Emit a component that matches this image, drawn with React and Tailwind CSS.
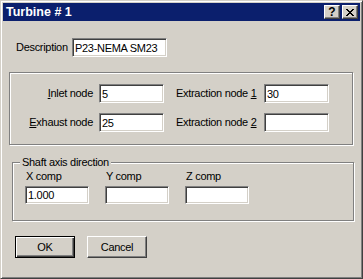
import React from "react";

const font = "font-['Liberation_Sans',Arial,sans-serif] text-[11px] tracking-[-0.3px] text-black";
const sunken =
  "block bg-white border border-t-[#808080] border-l-[#808080] border-b-white border-r-white shadow-[inset_1px_1px_0_#404040,inset_-1px_-1px_0_#d4d0c8] px-[2px] outline-none " +
  font;
const etched = "border border-[#808080] shadow-[inset_1px_1px_0_#fff,1px_1px_0_#fff]";

function Field({ value = "", w, h = 19 }) {
  return (
    <input
      readOnly
      defaultValue={value}
      className={sunken + (h === 19 ? " h-[19px]" : " h-[18px]") + (w === 95 ? " w-[95px]" : w === 64 ? " w-[64px]" : " w-[65px]")}
    />
  );
}

function TitleBtn({ children }) {
  return (
    <div className="w-[16px] h-[14px] bg-[#d4d0c8] border border-t-white border-l-white border-b-[#404040] border-r-[#404040] shadow-[inset_-1px_-1px_0_#808080] flex items-center justify-center">
      {children}
    </div>
  );
}

function Button({ children, isDefault }) {
  return (
    <div
      className={
        "w-[60px] h-[22px] flex items-center justify-center bg-[#d4d0c8] " +
        font +
        (isDefault
          ? " border border-black shadow-[inset_1px_1px_0_#fff,inset_-1px_-1px_0_#404040,inset_-2px_-2px_0_#808080]"
          : " border border-t-white border-l-white border-b-[#404040] border-r-[#404040] shadow-[inset_-1px_-1px_0_#808080]")
      }
    >
      {children}
    </div>
  );
}

export default function App() {
  return (
    <div className={"w-[363px] h-[279px] bg-[#d4d0c8] border border-t-[#d4d0c8] border-l-[#d4d0c8] border-r-[#404040] border-b-[#404040] shadow-[inset_1px_1px_0_#fff,inset_-1px_-1px_0_#808080] p-[2px] flex flex-col " + font}>
      {/* Title bar */}
      <div className="h-[18px] bg-[#0b1f6d] flex items-center justify-between pl-[3px] pr-[2px]">
        <span className="text-white font-bold text-[12.5px] tracking-[0px] font-['Liberation_Sans',Arial,sans-serif]">Turbine # 1</span>
        <div className="flex gap-[2px]">
          <TitleBtn>
            <span className="font-bold text-[12px] leading-none text-black font-['Liberation_Sans',Arial,sans-serif] tracking-[0px]">?</span>
          </TitleBtn>
          <TitleBtn>
            <svg width="8" height="7" viewBox="0 0 8 7">
              <path d="M0 0h2v1h1v1h2v-1h1v-1h2v1h-1v1h-1v1h-1v1h1v1h1v1h1v1h-2v-1h-1v-1h-2v1h-1v1h-2v-1h1v-1h1v-1h1v-1h-1v-1h-1v-1h-1z" fill="#000" />
            </svg>
          </TitleBtn>
        </div>
      </div>

      {/* Description */}
      <div className="mt-[17px] ml-[13px] flex items-center gap-[6px]">
        <span className="w-[50px]">Description</span>
        <Field value="P23-NEMA SM23" w={95} />
      </div>

      {/* Group 1 */}
      <div className={"mt-[15px] ml-[6px] w-[344px] h-[73px] pt-[11px] pl-[0px] " + etched}>
        <div className="grid grid-cols-[83px_65px_88px_65px] gap-x-[6px] gap-y-[10px] items-center">
          <span className="text-right">
            <u className="underline-offset-[1px]">I</u>nlet node
          </span>
          <Field value="5" />
          <span className="pl-[6px]">
            Extraction node <u className="underline-offset-[1px]">1</u>
          </span>
          <Field value="30" />
          <span className="text-right">
            <u className="underline-offset-[1px]">E</u>xhaust node
          </span>
          <Field value="25" />
          <span className="pl-[6px]">
            Extraction node <u className="underline-offset-[1px]">2</u>
          </span>
          <Field value="" />
        </div>
      </div>

      {/* Group 2 */}
      <div className={"relative mt-[17px] ml-[9px] w-[342px] h-[59px] pt-[7px] pl-[12px] " + etched}>
        <span className="absolute left-[7px] top-[-7px] px-[2px] bg-[#d4d0c8] leading-[12px]">Shaft axis direction</span>
        <div className="flex gap-[16px]">
          {[
            ["X comp", "1.000"],
            ["Y comp", ""],
            ["Z comp", ""],
          ].map(([l, v]) => (
            <div key={l} className="flex flex-col gap-[4px]">
              <span className="leading-[12px] pl-[1px]">{l}</span>
              <Field value={v} w={64} h={18} />
            </div>
          ))}
        </div>
      </div>

      {/* Buttons */}
      <div className="mt-[15px] ml-[12px] flex gap-[12px]">
        <Button isDefault>OK</Button>
        <Button>Cancel</Button>
      </div>
    </div>
  );
}
